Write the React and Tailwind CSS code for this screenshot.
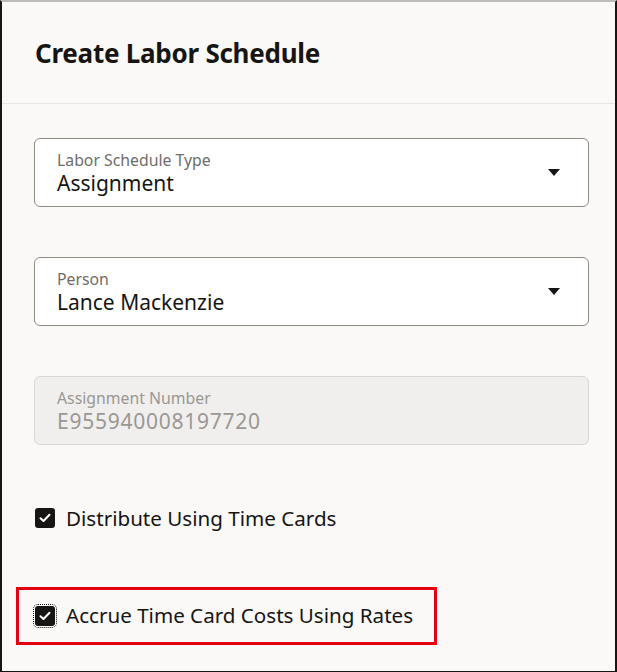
import React from "react";

function Caret() {
  return (
    <svg width="12" height="7" viewBox="0 0 12 7" className="block">
      <path d="M0 0 L12 0 L6 7 Z" fill="#161513" />
    </svg>
  );
}

function Check() {
  return (
    <div className="w-[20px] h-[20px] rounded-[3px] bg-[#161513] flex items-center justify-center">
      <svg width="12" height="10" viewBox="0 0 12 10">
        <path d="M1.5 5.2 L4.5 8 L10.5 1.8" stroke="#fff" strokeWidth="2" fill="none" strokeLinecap="round" strokeLinejoin="round" />
      </svg>
    </div>
  );
}

function Field({ label, value, disabled }) {
  return (
    <div
      className={
        "h-[69px] rounded-[6px] border flex items-center pl-[22px] pr-[28px] " +
        (disabled ? "bg-[#f1efed] border-[#d9d7d4]" : "bg-white border-[#8f8c88]")
      }
    >
      <div className="flex-1 flex flex-col pt-[1px]">
        <span className={"text-[15.8px] leading-[19px] " + (disabled ? "text-[#9a9794]" : "text-[#6f6c69]")}>{label}</span>
        <span className={"text-[21px] leading-[26px] " + (disabled ? "text-[#9a9794] tracking-[0.75px]" : "text-[#161513]")}>{value}</span>
      </div>
      {!disabled && <Caret />}
    </div>
  );
}

export default function App() {
  return (
    <div
      className="w-[617px] h-[672px] bg-[#faf9f8] border-l-2 border-r-2 border-b border-l-[#161513] border-r-[#161513] border-b-[#161513] border-t-2 border-t-[#bdbbb8] flex flex-col"
      style={{ fontFamily: "'Noto Sans', sans-serif" }}
    >
      <div className="h-[102px] border-b border-[#e8e6e3] pl-[33px] flex items-center pt-[1px]">
        <h1 className="text-[26px] font-bold text-[#161513] tracking-[-0.25px]">Create Labor Schedule</h1>
      </div>
      <div className="pl-[32px] pr-[26px] pt-[34px] flex flex-col gap-[50px]">
        <Field label="Labor Schedule Type" value="Assignment" />
        <Field label="Person" value="Lance Mackenzie" />
        <Field label="Assignment Number" value="E955940008197720" disabled />
      </div>
      <div className="pl-[33px] mt-[58px] flex items-center gap-[11px]">
        <Check />
        <span className="text-[20.6px] text-[#161513]">Distribute Using Time Cards</span>
      </div>
      <div className="ml-[14px] mt-[53px] w-[421px] h-[58px] border-[3px] border-[#e5000f] flex items-center pl-[16px] gap-[11px]">
        <div className="outline outline-1 outline-dotted outline-[#161513] outline-offset-[1px] rounded-[3px]">
          <Check />
        </div>
        <span className="text-[20.6px] text-[#161513]">Accrue Time Card Costs Using Rates</span>
      </div>
    </div>
  );
}
